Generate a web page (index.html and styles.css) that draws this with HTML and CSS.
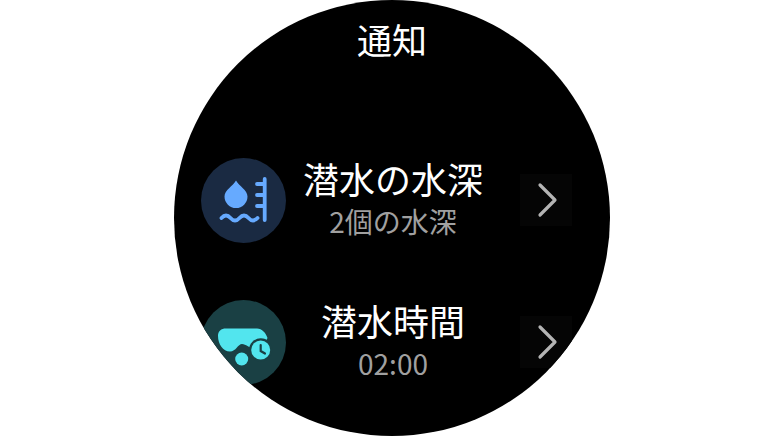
FILE: index.html
```html
<!DOCTYPE html>
<html lang="ja">
<head>
    <meta charset="UTF-8">
    <meta name="viewport" content="width=device-width, initial-scale=1.0">
    <title>通知</title>
    <link rel="stylesheet" href="styles.css">
</head>
<body>
    <div class="watch">
        <h1 class="title">通知</h1>

        <div class="row">
            <svg class="icon" viewBox="0 0 85 85">
                <circle cx="42.5" cy="42.5" r="42.5" fill="#1a2a42"/>
                <path d="M35 22.5C38 28 46.5 32 46.5 38.5A11.5 11.5 0 0 1 23.5 38.5C23.5 32 32 28 35 22.5Z" fill="#66aaff"/>
                <path d="M63.7 21V62M56 26H63.7M56 37H63.7M56 48H63.7" fill="none" stroke="#66aaff" stroke-width="3.8" stroke-linecap="round"/>
                <path d="M20.5 60q4.5 -5 9 0t9 0t9 0t9 0" fill="none" stroke="#66aaff" stroke-width="3.8" stroke-linecap="round"/>
            </svg>
            <div class="text">
                <div class="name">潜水の水深</div>
                <div class="sub">2個の水深</div>
            </div>
            <div class="arrow">
                <svg viewBox="0 0 52 52"><path d="M20 11L35 26L20 41" fill="none" stroke="#b4b4b4" stroke-width="3.2" stroke-linecap="round" stroke-linejoin="round"/></svg>
            </div>
        </div>

        <div class="row">
            <svg class="icon" viewBox="0 0 85 85">
                <circle cx="42.5" cy="42.5" r="42.5" fill="#1a4044"/>
                <path d="M25 28.5H56C61 28.5 65 33 66.5 38L60 50L52 48C48 48 45 44 41 44C37 44 35 51.5 29 51.5C22 51.5 17 44 17 36C17 31 20 28.5 25 28.5Z" fill="#52e5ee"/>
                <circle cx="40.7" cy="59" r="6.5" fill="#52e5ee"/>
                <circle cx="59.7" cy="50" r="11.7" fill="#1a4044"/>
                <circle cx="59.7" cy="50" r="9.5" fill="#52e5ee"/>
                <path d="M59.7 45V51L64 53.5" fill="none" stroke="#1a4044" stroke-width="2.2" stroke-linecap="round"/>
            </svg>
            <div class="text">
                <div class="name">潜水時間</div>
                <div class="sub">02:00</div>
            </div>
            <div class="arrow">
                <svg viewBox="0 0 52 52"><path d="M20 11L35 26L20 41" fill="none" stroke="#b4b4b4" stroke-width="3.2" stroke-linecap="round" stroke-linejoin="round"/></svg>
            </div>
        </div>
    </div>
</body>
</html>
```

FILE: styles.css
```css
body {
    margin: 0;
    background-color: #ffffff;
    font-family: "Noto Sans CJK JP", "Noto Sans", sans-serif;
}

.watch {
    width: 436px;
    height: 436px;
    margin-left: 174px;
    background-color: #000000;
    border-radius: 50%;
    overflow: hidden;
    color: #ffffff;
}

.title {
    margin: 0;
    height: 129px;
    padding-top: 15px;
    box-sizing: border-box;
    font-size: 35px;
    line-height: 48px;
    font-weight: 400;
    text-align: center;
}

.row {
    display: flex;
    align-items: center;
    height: 142px;
    padding-left: 27px;
}

.icon {
    width: 85px;
    height: 85px;
    flex-shrink: 0;
}

.text {
    width: 214px;
    margin-right: 20px;
    text-align: center;
}

.name {
    font-size: 36px;
    line-height: 42px;
}

.sub {
    font-size: 28px;
    line-height: 44px;
    color: #a0a0a0;
}

.arrow {
    width: 52px;
    height: 52px;
    background-color: #050505;
}

.arrow svg {
    display: block;
}
```
